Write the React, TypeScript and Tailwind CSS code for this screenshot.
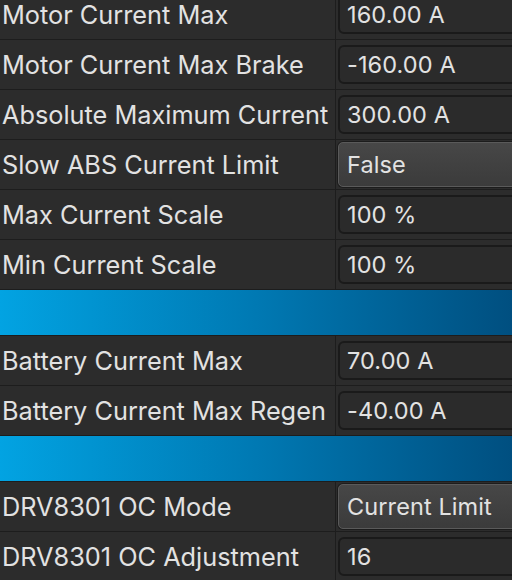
import React from "react";

type Row =
	| { kind: "field"; label: string; value: string; combo?: boolean }
	| { kind: "band" };

const rows: Row[] = [
	{ kind: "field", label: "Motor Current Max", value: "160.00 A" },
	{ kind: "field", label: "Motor Current Max Brake", value: "-160.00 A" },
	{ kind: "field", label: "Absolute Maximum Current", value: "300.00 A" },
	{ kind: "field", label: "Slow ABS Current Limit", value: "False", combo: true },
	{ kind: "field", label: "Max Current Scale", value: "100 %" },
	{ kind: "field", label: "Min Current Scale", value: "100 %" },
	{ kind: "band" },
	{ kind: "field", label: "Battery Current Max", value: "70.00 A" },
	{ kind: "field", label: "Battery Current Max Regen", value: "-40.00 A" },
	{ kind: "band" },
	{ kind: "field", label: "DRV8301 OC Mode", value: "Current Limit", combo: true },
	{ kind: "field", label: "DRV8301 OC Adjustment", value: "16" },
];

export default function App() {
	return (
		<div className="w-[512px] h-[580px] overflow-hidden bg-[#2c2c2c] font-['Inter','Liberation_Sans',sans-serif] text-[#e2e2e2]">
			<div className="-mt-[10px] flex flex-col">
				{rows.map((row, i) =>
					row.kind === "band" ? (
						<div
							key={i}
							className="h-[46px] shrink-0 border-b border-[#1d1d1d] bg-gradient-to-r from-[#02a3e2] via-[#0079b3] to-[#004f80]"
						/>
					) : (
						<div
							key={i}
							className="h-[50px] shrink-0 flex border-b border-[#1d1d1d]"
						>
							<div className="w-[336px] shrink-0 border-r border-[#1d1d1d] flex items-center pl-[2px] pt-[1px] text-[25.3px] whitespace-nowrap">
								{row.label}
							</div>
							<div className="flex-1 flex items-center pl-[2px]">
								{row.combo ? (
									<div className="h-[45px] w-[200px] shrink-0 flex items-center pl-[8px] rounded-[5px] border border-[#5a5a5a] bg-gradient-to-b from-[#474747] to-[#3b3b3b] shadow-[0_0_0_1px_#1c1c1c] text-[23.5px] tracking-[0.1px]">
										{row.value}
									</div>
								) : (
									<div className="h-[39px] w-[200px] shrink-0 flex items-center pl-[7px] rounded-[6px] border-2 border-[#1a1a1a] bg-[#2b2b2b] text-[23.5px] tracking-[0.1px]">
										{row.value}
									</div>
								)}
							</div>
						</div>
					),
				)}
			</div>
		</div>
	);
}
